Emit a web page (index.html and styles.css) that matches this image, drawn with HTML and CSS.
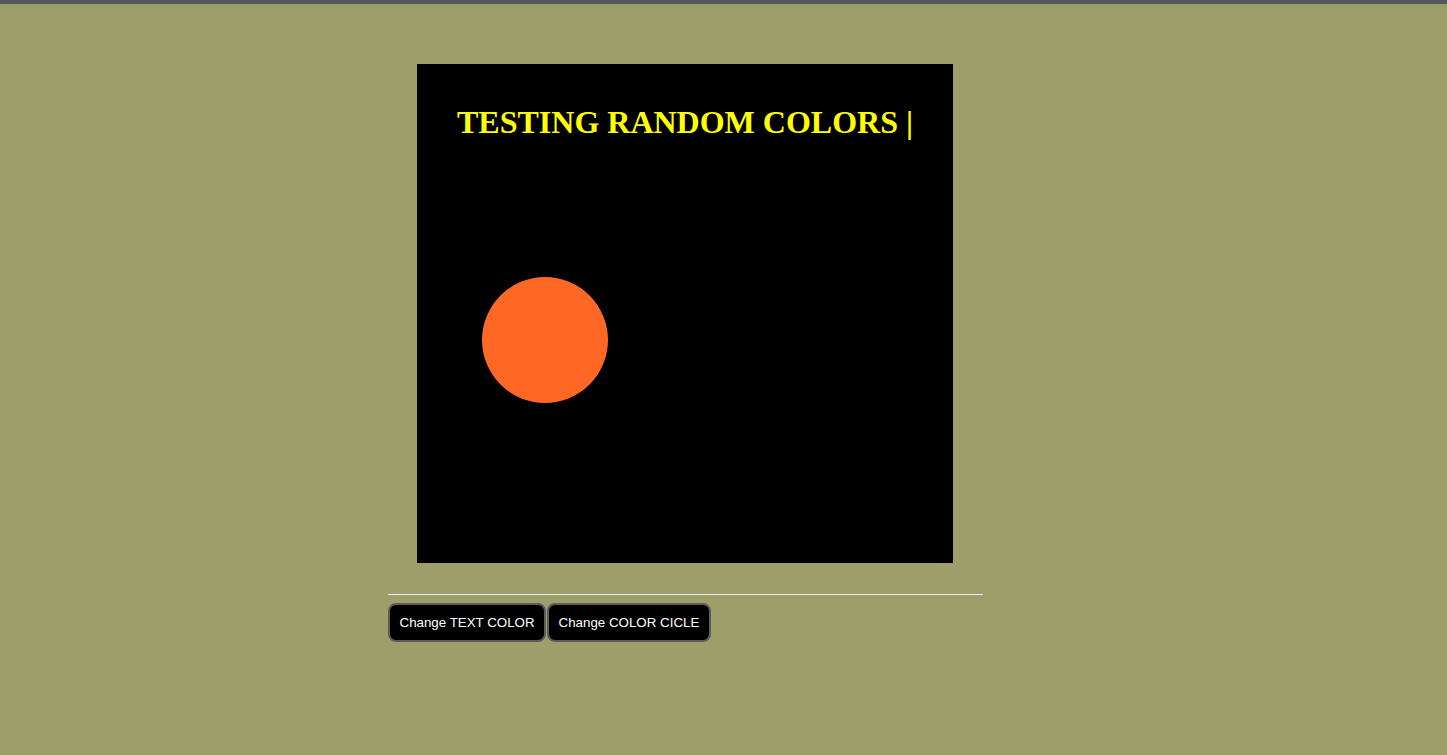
FILE: index.html
```html
<!DOCTYPE html>
<html>
<head>
<meta charset="utf-8">
<link rel="stylesheet" href="styles.css">
</head>
<body>
<div class="topbar"></div>
<main class="wrap">
  <div class="stage">
    <h1 class="title">TESTING RANDOM COLORS |</h1>
    <div class="circle"></div>
  </div>
  <hr class="rule">
  <div class="buttons">
    <button class="btn">Change TEXT COLOR</button>
    <button class="btn">Change COLOR CICLE</button>
  </div>
</main>
</body>
</html>
```
FILE: styles.css
```css
html, body {
  margin: 0;
  padding: 0;
  background: #9e9e6a;
  height: 100%;
}
.topbar {
  height: 4px;
  background: #55575e;
}
.wrap {
  width: 595px;
  margin-left: 388px;
  padding-top: 60px;
}
.stage {
  position: relative;
  width: 536px;
  height: 499px;
  margin: 0 0 0 29px;
  background: #000;
  overflow: hidden;
}
.title {
  margin: 40px 0 0;
  text-align: center;
  font-family: "Liberation Serif", "Times New Roman", serif;
  font-weight: bold;
  font-size: 32px;
  line-height: 37px;
  color: #ffff00;
}
.circle {
  position: absolute;
  left: 65px;
  top: 213px;
  width: 126px;
  height: 126px;
  border-radius: 50%;
  background: #ff6724;
}
.rule {
  margin: 31px 0 0;
  border: 0;
  border-top: 1px solid #ececf6;
  height: 0;
}
.buttons {
  display: flex;
  gap: 1px;
  margin-top: 8px;
}
.btn {
  height: 39px;
  margin: 0;
  padding: 0 9.5px;
  background: #000;
  color: #fff;
  border: 2px solid #5c5c5c;
  border-radius: 8px;
  font-family: "Liberation Sans", Arial, sans-serif;
  font-size: 13.33px;
  cursor: pointer;
}
```
